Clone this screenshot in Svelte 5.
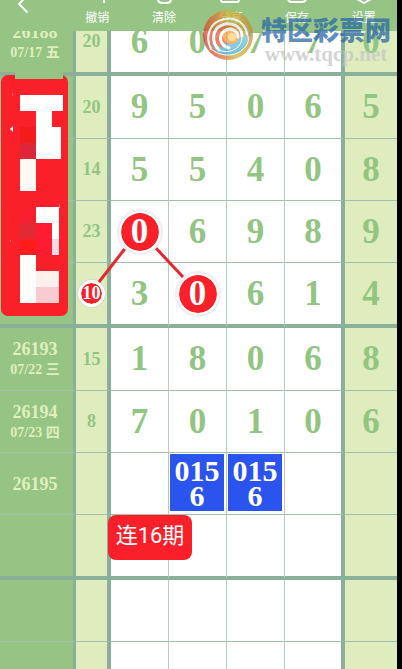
<script lang="ts">
  interface Row {
    issue: string;
    date: string;
    sum: string;
    digits: string[];
    last: string;
    height: number;
    thick?: boolean;
    hot?: number;
    sumHot?: boolean;
    lines?: boolean;
    picks?: boolean;
    tag?: string;
  }

  const tools = [
    { label: '撤销', icon: 'undo' },
    { label: '清除', icon: 'clear' },
    { label: '分享', icon: 'share' },
    { label: '保存', icon: 'save' },
    { label: '设置', icon: 'settings' },
  ];

  const rows: Row[] = [
    { issue: '26188', date: '07/17 五', sum: '20', digits: ['6', '0', '7', '7'], last: '0', height: 65, thick: true },
    { issue: '', date: '', sum: '20', digits: ['9', '5', '0', '6'], last: '5', height: 63 },
    { issue: '', date: '', sum: '14', digits: ['5', '5', '4', '0'], last: '8', height: 62 },
    { issue: '', date: '', sum: '23', digits: ['0', '6', '9', '8'], last: '9', height: 62, hot: 0, lines: true },
    { issue: '', date: '', sum: '10', digits: ['3', '0', '6', '1'], last: '4', height: 65, thick: true, hot: 1, sumHot: true },
    { issue: '26193', date: '07/22 三', sum: '15', digits: ['1', '8', '0', '6'], last: '8', height: 63 },
    { issue: '26194', date: '07/23 四', sum: '8', digits: ['7', '0', '1', '0'], last: '6', height: 62 },
    { issue: '26195', date: '', sum: '', digits: ['', '0156', '0156', ''], last: '', height: 62, picks: true },
    { issue: '', date: '', sum: '', digits: ['', '', '', ''], last: '', height: 65, thick: true, tag: '连16期' },
    { issue: '', date: '', sum: '', digits: ['', '', '', ''], last: '', height: 62 },
    { issue: '', date: '', sum: '', digits: ['', '', '', ''], last: '', height: 62 },
  ];

  // x, y, width, height, colour inside the red panel
  const blocks: [number, number, number, number, string][] = [
    [19, 20, 43, 16, '#fff'],
    [35, 36, 16, 16, '#fff'],
    [35, 52, 25, 32, '#fff'],
    [19, 52, 16, 16, '#f41b1c'],
    [19, 68, 16, 16, '#de2639'],
    [19, 84, 16, 32, '#fff9f5'],
    [35, 132, 23, 16, '#fffefb'],
    [51, 148, 7, 16, '#fff'],
    [51, 164, 7, 16, '#fbd9df'],
    [19, 132, 16, 16, '#f8202f'],
    [19, 148, 16, 16, '#e22a34'],
    [19, 164, 16, 16, '#ff1c1c'],
    [35, 148, 16, 32, '#ff1b31'],
    [19, 180, 16, 48, '#fffdfd'],
    [35, 180, 23, 16, '#f52028'],
    [35, 196, 23, 16, '#fff0ee'],
    [35, 212, 23, 16, '#f7cbd0'],
  ];
</script>

<div class="screen">
  <header class="bar">
    <button class="back" aria-label="返回">
      <svg width="12" height="20" viewBox="0 0 12 20"><path d="M10.500 1L2 10L10.500 18.500" /></svg>
    </button>
    {#each tools as tool (tool.icon)}
      <button class="tool">
        <svg width="20" height="20" viewBox="0 0 20 20">
          {#if tool.icon === 'undo'}
            <path d="M3 8h14v11" />
          {:else if tool.icon === 'clear'}
            <path d="M4 5v10q0 4 4 4h5q4 0 4-4V5M8 14.500h5" />
          {:else if tool.icon === 'share'}
            <path d="M1 5v11q0 2 2 2h14q2 0 2-2V5" />
          {:else if tool.icon === 'save'}
            <path d="M1 5v9q0 4 4 4h10q4 0 4-4V5" />
          {:else}
            <path d="M1 5v9l9 5l9-5V5" />
          {/if}
        </svg>
        <span>{tool.label}</span>
      </button>
    {/each}
  </header>

  <main>
    <table>
      <colgroup>
        <col class="c-issue" />
        <col class="c-sum" />
        <col /><col /><col />
        <col class="c-fourth" />
        <col class="c-last" />
      </colgroup>
      <tbody>
        {#each rows as row, i (i)}
          <tr class:thick={row.thick} style="height: {row.height}px">
            <th scope="row" class="issue">
              {#if row.issue}<div class="num">{row.issue}</div>{/if}
              {#if row.date}<div class="date">{row.date}</div>{/if}
              {#if i === 1}
                <svg class="panel" width="67" height="241" viewBox="0 0 67 241" aria-hidden="true">
                  <rect width="67" height="241" rx="7" fill="#fa202a" />
                  <path d="M14-5h48v9H14z" fill="#95c484" />
                  {#each blocks as [x, y, w, h, fill]}
                    <rect {x} {y} width={w} height={h} {fill} shape-rendering="crispEdges" />
                  {/each}
                  <path d="M9 54l3-3v6z" fill="#fff" />
                  <path d="M11.500 18v3M9.500 165v2M58.500 129v4" stroke="#e9747e" />
                </svg>
              {/if}
            </th>
            <td class="sum">
              {#if row.sumHot}<span class="ball small">{row.sum}</span>{:else}{row.sum}{/if}
            </td>
            {#each row.digits as digit, d}
              <td
                class="digit"
                class:fourth={d === 3}
                class:linked={row.lines && d === 0}
                class:picked={row.picks && digit}
              >
                {#if row.lines && d === 0}
                  <svg class="links" width="96" height="92" viewBox="0 0 96 92" aria-hidden="true">
                    <path d="M38 53L10 89M65 53L94 84" />
                  </svg>
                {/if}
                {#if row.hot === d}
                  <span class="ball">{digit}</span>
                {:else if row.picks && digit}
                  <div class="pick">{digit}</div>
                {:else}
                  {digit}
                {/if}
                {#if row.tag && d === 0}<div class="tag">{row.tag}</div>{/if}
              </td>
            {/each}
            <td class="last">{row.last}</td>
          </tr>
        {/each}
      </tbody>
    </table>
  </main>

  <div class="watermark">
    <svg width="50" height="52" viewBox="0 0 50 52" aria-hidden="true">
      <defs>
        <linearGradient id="rim" x1="0" y1="0.6" x2="1" y2="0.4">
          <stop offset="0" stop-color="#d8392f" />
          <stop offset="0.35" stop-color="#dd7a3c" />
          <stop offset="0.6" stop-color="#c8b83c" />
          <stop offset="1" stop-color="#c98a35" />
        </linearGradient>
        <linearGradient id="sea" x1="1" y1="0" x2="0" y2="1">
          <stop offset="0" stop-color="#7fd0dd" />
          <stop offset="1" stop-color="#2f9cc6" />
        </linearGradient>
      </defs>
      <circle cx="25" cy="26" r="25" fill="url(#rim)" />
      <path d="M43 16C50 30 42 44 27 46C17 47 10 41 9 33C17 40 28 41 36 35C42 30 44 24 43 16Z" fill="url(#sea)" />
      <path d="M10 30C8 20 15 13 25 13C34 13 40 19 40 27C40 34 34 39 27 39C17 39 12 36 10 30Z" fill="#df5a3c" />
      <path d="M39 22C43 31 37 39 28 39C21 39 17 35 17 29C20 35 27 37 32 33C36 30 38 27 39 22Z" fill="#5fbdd5" />
      <path d="M20 29C18 22 23 18 29 18C35 19 38 24 36 29C35 34 28 36 24 34C22 33 21 31 20 29Z" fill="#f5a03e" />
      <g fill="none" stroke="#fff" stroke-linecap="round">
        <path d="M8 40C1 26 8 12 22 10C33 8 42 14 44 25" stroke-width="2" />
        <path d="M16 41C8 33 9 20 19 16C29 12 39 18 39 27" stroke-width="3" />
        <path d="M26 39C17 37 15 27 21 22C27 18 35 21 35 28" stroke-width="3" />
        <path d="M8 40C19 49 35 48 43 37C46 33 46 29 44 25" stroke-width="1" />
        <path d="M16 41C27 46 40 39 39 27" stroke-width="1" />
      </g>
      <circle cx="29" cy="28" r="4" fill="#ffd27a" />
    </svg>
    <div class="brand">
      <div class="name">特区彩票网</div>
      <div class="site">www.tqcp.net</div>
    </div>
  </div>
</div>

<style>
  :global(body) {
    margin: 0;
    background: #000;
  }
  .screen {
    position: relative;
    height: 100vh;
    overflow: hidden;
    padding-right: 5px;
    font-family: 'Liberation Serif', 'Noto Sans CJK SC', serif;
  }
  .bar {
    position: absolute;
    z-index: 2;
    top: 0;
    left: 0;
    right: 5px;
    height: 31px;
    display: grid;
    grid-template-columns: 64px repeat(5, 1fr);
    background: #95c484;
    overflow: hidden;
  }
  .bar button {
    display: flex;
    flex-direction: column;
    align-items: center;
    justify-content: flex-end;
    height: 31px;
    padding: 0;
    border: 0;
    background: none;
    color: #fff;
    font: 12px/16px Roboto, 'Noto Sans CJK SC', sans-serif;
  }
  .bar svg {
    flex-shrink: 0;
    fill: none;
    stroke: #fff;
    stroke-width: 2;
  }
  .bar .back {
    padding: 0 18px 17px 0;
  }
  .bar .tool {
    gap: 6px;
    padding-bottom: 5px;
  }
  main {
    padding-top: 11px;
  }
  table {
    width: 100%;
    table-layout: fixed;
    border-collapse: separate;
    border-spacing: 0;
    background: #fff;
  }
  .c-issue { width: 76px; }
  .c-sum { width: 35px; }
  .c-fourth { width: 60px; }
  .c-last { width: 52px; }
  th,
  td {
    position: relative;
    box-sizing: border-box;
    padding: 0;
    text-align: center;
    vertical-align: middle;
    font-weight: bold;
    border: 0 solid #8bb09a;
    border-bottom: 1px solid #a3c0ae;
  }
  .thick th,
  .thick td {
    border-bottom: 4px solid #8bb09a;
  }
  .issue {
    background: #95c484;
    color: #e0efbd;
    border-right: 3px solid #8bb09a;
  }
  th.issue {
    padding-right: 3px;
  }
  .num {
    font-size: 18px;
    line-height: 22px;
  }
  .date {
    font-size: 14px;
    line-height: 20px;
  }
  .sum {
    background: #dfedbe;
    color: #92c482;
    font-size: 18px;
    border-right: 4px solid #8bb09a;
  }
  .digit {
    color: #92c482;
    font-size: 35px;
    line-height: 40px;
    border-right: 1px solid #b9cabf;
  }
  .fourth {
    border-right: 4px solid #8bb09a;
  }
  .linked {
    z-index: 1;
  }
  td.picked {
    vertical-align: top;
  }
  .last {
    background: #dfedbe;
    color: #92c482;
    font-size: 35px;
    line-height: 40px;
  }
  .ball {
    position: relative;
    display: block;
    width: 38px;
    height: 38px;
    margin: 0 auto;
    border: 2px solid #fff;
    border-radius: 50%;
    background: #fa202a;
    background-clip: padding-box;
    box-shadow: 0 0 0 2px #f1eded;
    color: #fff;
    line-height: 38px;
  }
  .ball.small {
    width: 21px;
    height: 21px;
    border-width: 3px;
    box-shadow: 0 0 0 1px #d9dcc4;
    line-height: 21px;
  }
  .links {
    position: absolute;
    top: -8px;
    left: -22px;
    overflow: visible;
    fill: none;
    stroke: #e9252f;
    stroke-width: 3;
  }
  .pick {
    box-sizing: border-box;
    height: 57px;
    margin: 1px 2px 0 1px;
    padding: 4px 4px 0;
    background: #2b53ee;
    color: #fff;
    font-size: 30px;
    line-height: 25px;
    word-break: break-all;
  }
  .tag {
    position: absolute;
    z-index: 1;
    top: 0;
    left: -3px;
    width: 84px;
    height: 45px;
    border-radius: 8px;
    background: #fa202a;
    color: #fff;
    font: 22px/42px Roboto, 'Noto Sans CJK SC', sans-serif;
    white-space: nowrap;
  }
  .panel {
    position: absolute;
    z-index: 1;
    top: -1px;
    left: 1px;
    overflow: visible;
  }
  .watermark {
    position: absolute;
    z-index: 3;
    top: 9px;
    right: 11px;
    display: flex;
    gap: 8px;
    opacity: 0.75;
  }
  .brand {
    display: flex;
    flex-direction: column;
    align-items: center;
    padding-top: 5px;
  }
  .name {
    color: #2b68a6;
    font: 900 26px/30px 'Noto Sans CJK SC', sans-serif;
  }
  .site {
    color: #c3c8c5;
    font-size: 21px;
    font-weight: bold;
    line-height: 20px;
  }
</style>
